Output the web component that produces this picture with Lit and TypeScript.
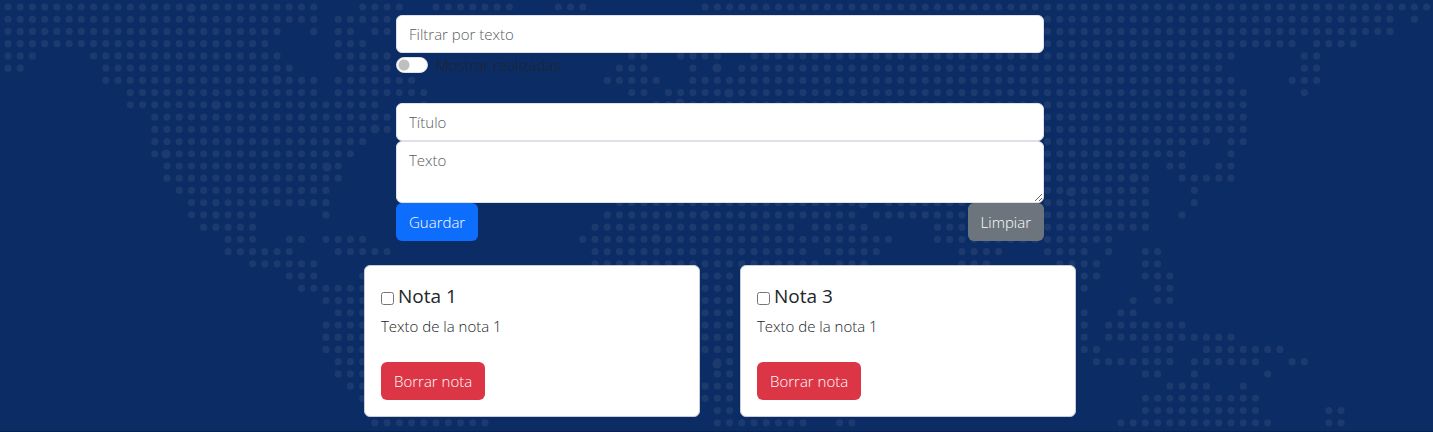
import { LitElement, html, svg, css } from "lit";
import { customElement, property, state } from "lit/decorators.js";

// Dotted world map: every line lists the filled column ranges of one grid row.
const MAP_ROWS = [
  "0-25 29-32 35-41 45-47 57-116",
  "0-25 27-32 85-113 115",
  "0-22 25 27-28 30-31 85-113",
  "0-21 27-29 85-105 107-110",
  "0-2 7-22 27-31 51-52 55-58 61-100 106-107",
  "0-1 8-23 28-31 50-52 56 58 60-99 106-107",
  "8-25 27-33 49-53 56-100 105-107",
  "10-25 27-34 51-52 54-101 106",
  "10-30 34 53-101",
  "12-31 85-101",
  "12-31 85-101",
  "12-29 85-98 100-101",
  "12-28 85-96 100",
  "13-27 85-93 95-96 99-100",
  "13-27 85-93 96-100",
  "14-26 85-93 97",
  "15-26 50-70 72-93 97",
  "15-20 26 49-69 71-93 96",
  "16-20 48-64 66-70 76-93",
  "18-20 23-24 26-29 47-72 76-90",
  "18-23 27-31 48-65 67-71 78-81 85-88 90 93-94",
  "20-25 48-66 68-70 78-80 86-89 93-94",
  "23-25 29 57-59 88-89 93-95",
  "24-29 57-59 88 94-95",
  "26-29 57-59 92 94-95",
  "27-29 57-59 88 91-92",
  "26-29 57-59 88 90-96",
  "26-29 57-59 88 90-100",
  "26-29 57-59 88-89 93-95 98-104",
  "27-29 58-59 89-95 97-102 105-106",
  "27-29 58-59 93-94 97 103",
  "28-29 57-59 95-98 101",
  "29 57-59 93-102",
  "58-59 93-102 108-109",
  "30-39 58-65 68-69 91-103 108-109",
];

const CITIES = [
  [191, 8], [277, 80], [216, 105], [375, 129], [166, 154], [327, 167],
  [1134, 178], [1071, 192], [680, 103], [717, 68], [705, 215], [729, 93],
  [863, 204], [656, 239], [717, 364],
];

const PITCH = 12.23;

function dotPath(cx: number, cy: number, r: number): string {
  return `M${(cx - r).toFixed(2)} ${cy.toFixed(2)}a${r} ${r} 0 1 0 ${2 * r} 0a${r} ${r} 0 1 0 ${-2 * r} 0z`;
}

const MAP_PATH =
  MAP_ROWS.map((row, r) =>
    row
      .split(" ")
      .map((range) => {
        const [from, to = from] = range.split("-").map(Number);
        let d = "";
        for (let c = from; c <= to; c++) d += dotPath(8 + c * PITCH, 7 + r * PITCH, 3.6);
        return d;
      })
      .join("")
  ).join("") + CITIES.map(([x, y]) => dotPath(x, y, 4.6)).join("");

const controls = css`
  :host {
    display: block;
  }
  *,
  *::before {
    box-sizing: border-box;
  }
  .btn {
    padding: 6px 12px;
    border: 1px solid transparent;
    border-radius: 6px;
    font: inherit;
    color: #fff;
    cursor: pointer;
  }
  .primary {
    background: #0d6efd;
  }
  .secondary {
    background: #6c757d;
  }
  .danger {
    background: #dc3545;
  }
`;

interface Note {
  id: number;
  title: string;
  text: string;
  done: boolean;
}

@customElement("note-card")
class NoteCard extends LitElement {
  static styles = [
    controls,
    css`
      .card {
        padding: 16px;
        border: 1px solid #c9ccd3;
        border-radius: 6px;
        background: #fff;
      }
      .title {
        display: flex;
        align-items: center;
        gap: 4px;
        margin: 0 0 4px;
        font-size: 19px;
        font-weight: 500;
        line-height: 28px;
      }
      .done {
        width: 13px;
        height: 13px;
        margin: 4px 0 0;
      }
      .text {
        margin: 0 0 24px;
      }
    `,
  ];

  @property({ attribute: false }) note!: Note;

  private remove() {
    this.dispatchEvent(new CustomEvent("remove-note", { detail: this.note.id }));
  }

  render() {
    return html`
      <article class="card">
        <h2 class="title">
          <input class="done" id="done" type="checkbox" .checked=${this.note.done} />
          <label for="done">${this.note.title}</label>
        </h2>
        <p class="text">${this.note.text}</p>
        <button class="btn danger" type="button" @click=${this.remove}>Borrar nota</button>
      </article>
    `;
  }
}

@customElement("app-root")
class AppRoot extends LitElement {
  static styles = [
    controls,
    css`
      :host {
        display: grid;
        box-sizing: border-box;
        min-height: 100vh;
        border-bottom: 1px solid #08234f;
        background: #0b2c65;
        color: #212529;
        font: 340 15px/24px "Open Sans", "Noto Sans", sans-serif;
      }
      .map {
        grid-area: 1 / 1;
        width: 100%;
        height: 100%;
        min-height: 0;
        overflow: hidden;
        fill: #1c3a6e;
      }
      .page {
        grid-area: 1 / 1;
        width: 100%;
        max-width: 719px;
        margin: 0 auto;
        padding: 15px 0 14px 7px;
      }
      .forms {
        padding: 0 32px;
      }
      .field {
        display: block;
        width: 100%;
        height: 38px;
        padding: 6px 12px;
        border: 1px solid #dee2e6;
        border-radius: 6px;
        background: #fff;
        color: #212529;
        font: inherit;
      }
      .field::placeholder {
        color: #595c5f;
        opacity: 1;
      }
      .area {
        height: 62px;
        resize: vertical;
      }
      .toggle {
        display: flex;
        align-items: center;
        gap: 8px;
        margin-bottom: 26px;
      }
      .switch {
        appearance: none;
        width: 32px;
        height: 16px;
        margin: 0;
        border: 1px solid #dee2e6;
        border-radius: 8px;
        background: radial-gradient(circle at 7px 7px, #bfbfbf 5px, #fff 6px);
      }
      .switch:checked {
        background: radial-gradient(circle at 23px 7px, #fff 5px, #0d6efd 6px);
      }
      .actions {
        display: flex;
        justify-content: space-between;
        margin-bottom: 24px;
      }
      .notes {
        display: grid;
        grid-template-columns: 1fr 1fr;
        gap: 40px;
      }
    `,
  ];

  @state() private notes: Note[] = [
    { id: 1, title: "Nota 1", text: "Texto de la nota 1", done: false },
    { id: 3, title: "Nota 3", text: "Texto de la nota 1", done: false },
  ];

  private removeNote(e: CustomEvent<number>) {
    this.notes = this.notes.filter((n) => n.id !== e.detail);
  }

  render() {
    return html`
      <svg class="map" aria-hidden="true">${svg`<path d=${MAP_PATH} />`}</svg>
      <main class="page">
        <div class="forms">
          <input class="field" type="text" placeholder="Filtrar por texto" aria-label="Filtrar por texto" />
          <div class="toggle">
            <input class="switch" id="show" type="checkbox" role="switch" />
            <label for="show">Mostrar realizadas</label>
          </div>
          <form @submit=${(e: Event) => e.preventDefault()}>
            <input class="field" type="text" placeholder="Título" aria-label="Título" />
            <textarea class="field area" placeholder="Texto" aria-label="Texto"></textarea>
            <div class="actions">
              <button class="btn primary" type="submit">Guardar</button>
              <button class="btn secondary" type="reset">Limpiar</button>
            </div>
          </form>
        </div>
        <section class="notes">
          ${this.notes.map(
            (note) => html`<note-card .note=${note} @remove-note=${this.removeNote}></note-card>`
          )}
        </section>
      </main>
    `;
  }
}
